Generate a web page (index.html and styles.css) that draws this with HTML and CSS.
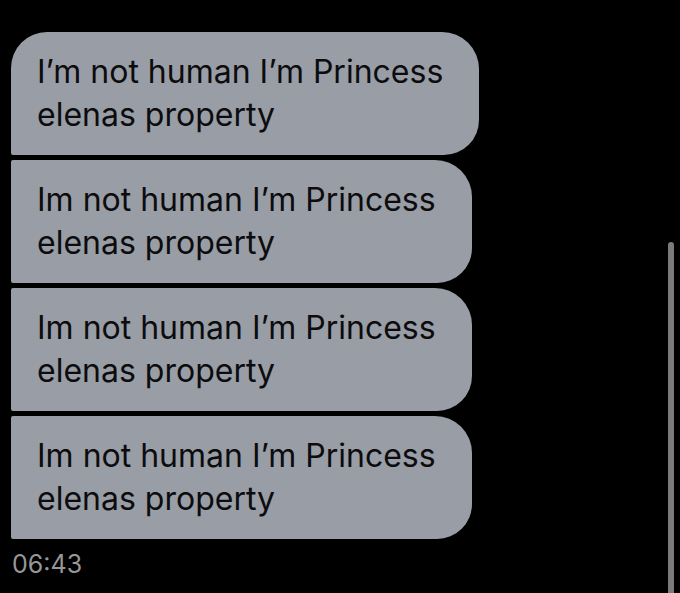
FILE: index.html
```html
<!DOCTYPE html>
<html>
    <head>
        <meta charset="UTF-8">
        <title>Messages</title>
        <link rel="stylesheet" href="styles.css">
    </head>
    <body>
        <div id="thread">
            <div class="bubble first">I’m not human I’m Princess<br>elenas property</div>
            <div class="bubble">Im not human I’m Princess<br>elenas property</div>
            <div class="bubble">Im not human I’m Princess<br>elenas property</div>
            <div class="bubble">Im not human I’m Princess<br>elenas property</div>
            <div class="time">06:43</div>
        </div>
        <div class="scrollbar"></div>
    </body>
</html>
```

FILE: styles.css
```css
html, body {
    margin: 0;
    height: 100%;
    background-color: #000000;
    overflow: hidden;
}
#thread {
    display: flex;
    flex-direction: column;
    align-items: flex-start;
    gap: 5px;
    padding: 32px 0 0 11px;
    font-family: Inter, "Noto Sans", sans-serif;
}
.bubble {
    background-color: #999da5;
    color: #0c0c0e;
    font-size: 32px;
    line-height: 43px;
    padding: 18px 36px 19px 26px;
    border-radius: 2px 37px 35px 2px;
}
.first {
    border-top-left-radius: 36px;
}
.time {
    color: #979797;
    font-size: 25px;
    margin-top: 5px;
    padding-left: 1px;
}
.scrollbar {
    position: absolute;
    left: 668px;
    top: 242px;
    bottom: 0;
    width: 6px;
    border-radius: 3px 3px 0 0;
    background-color: #7b7b7b;
}
```
